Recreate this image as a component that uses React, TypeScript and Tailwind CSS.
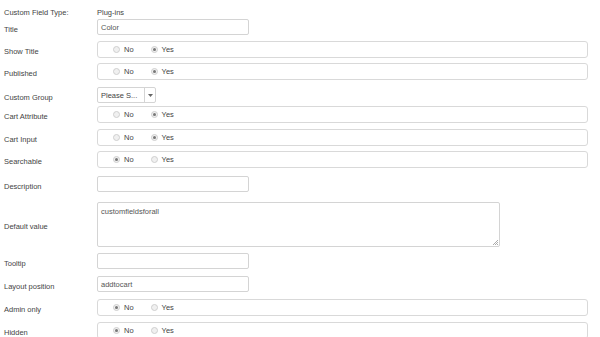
import React from 'react';

type RadioValue = 'no' | 'yes';

const Radio = ({ checked, label }: { checked: boolean; label: string }) => (
  <span className="flex items-center">
    <span className="flex h-[7px] w-[7px] items-center justify-center rounded-full border border-[#cfcfcf] bg-[#f0f0f0]">
      {checked && <span className="h-[3px] w-[3px] rounded-full bg-[#777]" />}
    </span>
    <span className="ml-[4px] text-[#444]">{label}</span>
  </span>
);

const YesNo = ({ value }: { value: RadioValue }) => (
  <div className="flex h-[17px] w-[491px] items-center rounded-[3px] border border-[#d9d9d9] bg-white pl-[15px]">
    <Radio checked={value === 'no'} label="No" />
    <span className="w-[17px]" />
    <Radio checked={value === 'yes'} label="Yes" />
  </div>
);

const TextInput = ({ value = '' }: { value?: string }) => (
  <div className="flex h-[16px] w-[152px] items-center rounded-[2px] border border-[#d4d4d4] bg-white pl-[3px] text-[#555]">
    {value}
  </div>
);

const Row = ({
  label,
  className = '',
  children,
}: {
  label: string;
  className?: string;
  children: React.ReactNode;
}) => (
  <div className={`flex items-center ${className}`}>
    <div className="mt-[4px] w-[93px] shrink-0 text-[#444]">{label}</div>
    {children}
  </div>
);

export default function App() {
  return (
    <div
      className="h-[337px] w-[600px] overflow-hidden bg-white pl-[4px] text-[7.5px] leading-[9px]"
      style={{ fontFamily: '"Liberation Sans", Arial, sans-serif' }}
    >
      <div className="flex h-[19px] items-start pt-[8px]">
        <div className="w-[93px] shrink-0 text-[#444]">Custom Field Type:</div>
        <div className="text-[#444]">Plug-ins</div>
      </div>

      <Row label="Title">
        <TextInput value="Color" />
      </Row>
      <Row label="Show Title" className="mt-[6px]">
        <YesNo value="yes" />
      </Row>
      <Row label="Published" className="mt-[5px]">
        <YesNo value="yes" />
      </Row>
      <Row label="Custom Group" className="mt-[7px]">
        <div className="flex h-[16px] w-[59px] items-center rounded-[2px] border border-[#d4d4d4] bg-white">
          <div className="flex-1 pl-[3px] text-[#444]">Please S...</div>
          <div className="flex h-full w-[11px] items-center justify-center border-l border-[#d4d4d4]">
            <svg width="5" height="3" viewBox="0 0 5 3">
              <path d="M0 0 L5 0 L2.5 3 Z" fill="#666" />
            </svg>
          </div>
        </div>
      </Row>
      <Row label="Cart Attribute" className="mt-[3px]">
        <YesNo value="yes" />
      </Row>
      <Row label="Cart Input" className="mt-[6px]">
        <YesNo value="yes" />
      </Row>
      <Row label="Searchable" className="mt-[5px]">
        <YesNo value="no" />
      </Row>
      <Row label="Description" className="mt-[8px]">
        <TextInput />
      </Row>
      <Row label="Default value" className="mt-[10px]">
        <div className="relative h-[45px] w-[403px] rounded-[2px] border border-[#d4d4d4] bg-white pl-[3px] pt-[4px] text-[#555]">
          customfieldsforall
          <svg className="absolute bottom-[1px] right-[1px]" width="6" height="6" viewBox="0 0 6 6">
            <path d="M1 6 L6 1 M3 6 L6 3 M5 6 L6 5" stroke="#888" strokeWidth="0.7" />
          </svg>
        </div>
      </Row>
      <Row label="Tooltip" className="mt-[6px]">
        <TextInput />
      </Row>
      <Row label="Layout position" className="mt-[7px]">
        <TextInput value="addtocart" />
      </Row>
      <Row label="Admin only" className="mt-[7px]">
        <YesNo value="no" />
      </Row>
      <Row label="Hidden" className="mt-[6px]">
        <YesNo value="no" />
      </Row>
    </div>
  );
}
